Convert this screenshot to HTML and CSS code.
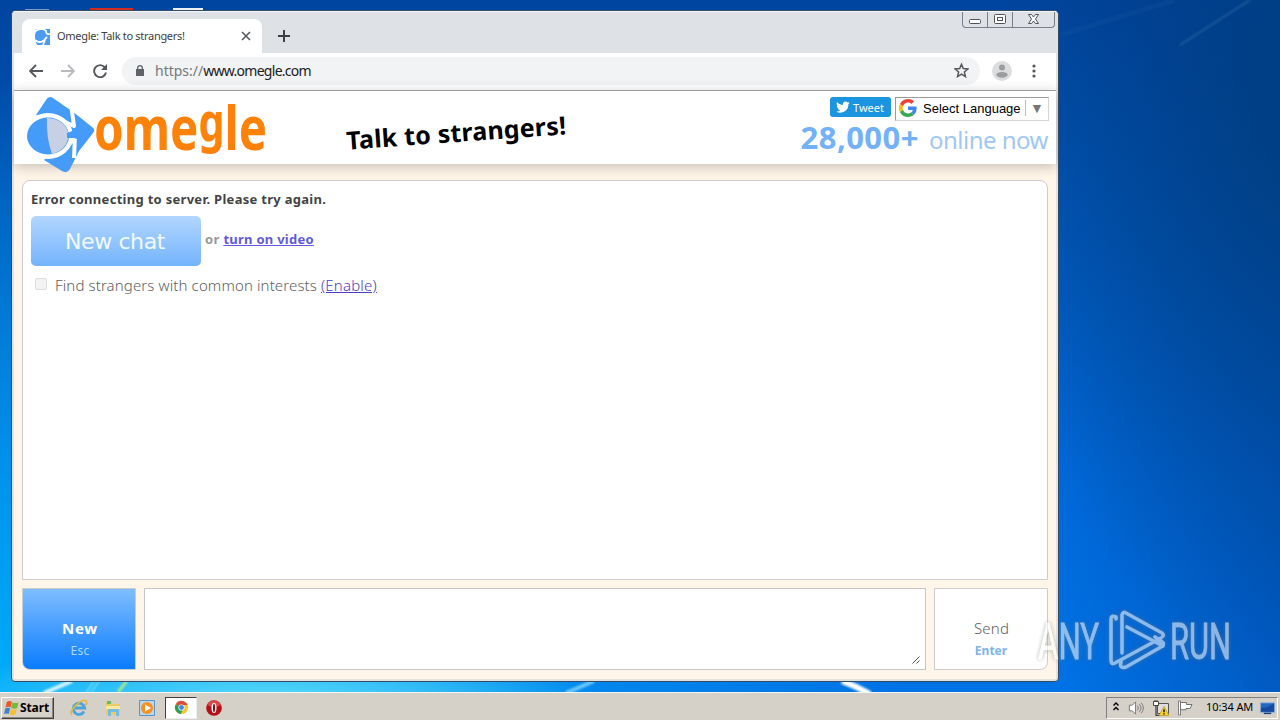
FILE: index.html
```html
<!DOCTYPE html>
<html lang="en">
<head>
<meta charset="utf-8">
<title>Omegle: Talk to strangers!</title>
<link rel="stylesheet" href="styles.css">
</head>
<body>
<div class="desktop">
  <svg class="wallpaper" viewBox="0 0 1280 720">
    <defs>
      <filter id="soft"><feGaussianBlur stdDeviation="1"/></filter>
    </defs>
    <g filter="url(#soft)" fill="none">
      <path d="M44 693L72 681" stroke="#d8f6ff" stroke-width="4"/>
      <path d="M86 693l8-12M91 693l8-12" stroke="#70dcf8" stroke-width="1.5"/>
      <path d="M118 692l9-11" stroke="#a8e890" stroke-width="3"/>
      <path d="M566 693l28-12" stroke="#70c8ff" stroke-width="4"/>
      <path d="M842 681q14 5 28 13" stroke="#fff" stroke-width="6"/>
      <path d="M1180 45L1250 0" stroke="#4b82b5" stroke-width="2" opacity=".4"/>
      <path d="M1060 35L1175 0" stroke="#3b72ad" stroke-width="5" opacity=".12"/>
    </g>
    <path d="M90 8h43v3H90z" fill="#d22b24"/><path d="M173 8h30v3h-30z" fill="#eef1f4"/><path d="M25 9h24v2H25z" fill="#7f9bc0"/>
  </svg>

  <main class="window">
    <div class="tabstrip">
      <div class="tab">
        <svg class="favicon" viewBox="0 0 17 17"><path d="M2 1h14v16H3l-2-5z" fill="#4b9cf4"/><path d="M0 4Q8-2 12 3q0 4 4 3M1 12q5 4 9 0l3-3M11 12l-2 5" fill="none" stroke="#fff" stroke-width="1.800"/><circle cx="6" cy="8" r="5" fill="#4b9cf4"/></svg>
        <span class="tab-title">Omegle: Talk to strangers!</span>
        <svg class="tab-close" viewBox="0 0 10 10"><path d="M1 1l8 8M9 1L1 9" stroke="#5a5d61" stroke-width="1.700"/></svg>
      </div>
      <svg class="new-tab" viewBox="0 0 12 12"><path d="M6 0v12M0 6h12" stroke="#3c4043" stroke-width="2"/></svg>
      <div class="caption">
        <span class="cap"><svg viewBox="0 0 13 14"><rect x=".5" y="6.500" width="11" height="4" rx="1" fill="#fff" stroke="#50535a"/></svg></span>
        <span class="cap"><svg viewBox="0 0 13 14"><rect x=".5" y="1.500" width="11" height="9" rx="1" fill="#fff" stroke="#50535a"/><rect x="3.500" y="4.500" width="5" height="3" fill="#fff" stroke="#50535a"/></svg></span>
        <span class="cap cap-close"><svg viewBox="0 0 13 14"><path d="M1.500 1.500h3l2 2.500 2-2.500h3L8.500 6l3 4.500h-3l-2-2.500-2 2.500h-3l3-4.500z" fill="#fff" stroke="#50535a"/></svg></span>
      </div>
    </div>
    <div class="toolbar">
      <svg class="nav back" viewBox="0 0 14 14"><path d="M14 7H1.500M7 1L1 7l6 6" fill="none" stroke="#55585c" stroke-width="1.900"/></svg>
      <svg class="nav fwd" viewBox="0 0 14 14"><path d="M0 7h12.500M7 1l6 6-6 6" fill="none" stroke="#b9bbbe" stroke-width="1.900"/></svg>
      <svg class="nav reload" viewBox="0 0 14 14"><path d="M11.800 3.300A6 6 0 1 0 13 8.500" fill="none" stroke="#55585c" stroke-width="1.900"/><path d="M14 0v6H8z" fill="#55585c"/></svg>
      <div class="omnibox">
        <svg class="lock" viewBox="0 0 8 11"><path d="M0 4h8v7H0z" fill="#5f6368"/><path d="M1.700 5V3a2.300 2.300 0 0 1 4.600 0v2" fill="none" stroke="#5f6368" stroke-width="1.300"/></svg>
        <span class="url"><span class="scheme">https://</span>www.omegle.com</span>
        <svg class="star" viewBox="0 0 14 14"><path d="M7 1.200l1.700 4 4.300.4-3.300 2.800 1 4.300L7 10.400l-3.700 2.300 1-4.300L1 5.600l4.300-.4z" fill="none" stroke="#55585c" stroke-width="1.400"/></svg>
      </div>
      <svg class="avatar" viewBox="0 0 20 20"><circle cx="10" cy="10" r="10" fill="#dcdddf"/><circle cx="10" cy="6.500" r="3" fill="#9b9da0"/><ellipse cx="10" cy="13.800" rx="5.700" ry="2.900" fill="#9b9da0"/></svg>
      <svg class="menu" viewBox="0 0 4 14"><circle cx="2" cy="2" r="1.600"/><circle cx="2" cy="7" r="1.600"/><circle cx="2" cy="12" r="1.600"/></svg>
    </div>

    <div class="page">
      <header class="header">
        <svg class="logo" viewBox="0 0 260 84">
          <path d="M17 24L27 9q3-5 7-2l10 7 9 6 20 16q4 3 1 6L60 60 51 78q-3 5-8 2L25 69 40 55V32z" fill="#449cf8"/>
          <ellipse cx="29" cy="45" rx="25" ry="23" fill="#fff"/>
          <path d="M46 31l9 4-3-22M47 58l9-13-1 22" fill="none" stroke="#fff" stroke-width="4" stroke-linejoin="round"/>
          <ellipse cx="29" cy="45" rx="21" ry="18.500" fill="#449cf8"/>
          <path d="M28 27C55 28 56 57 33 63Q27 46 28 27z" fill="#c8d0e5"/>
          <path d="M48 42l13-5v12l-6-2h-7z" fill="#449cf8"/>
          <text class="logo-word" x="75" y="59" textLength="173" lengthAdjust="spacingAndGlyphs">ome<tspan class="logo-g" dy="-9">g</tspan><tspan dy="9">le</tspan></text>
        </svg>
        <div class="tagline">Talk to strangers!</div>
        <div class="header-right">
          <div class="widgets">
            <span class="tweet"><svg viewBox="0 0 24 24"><path d="M23.600 4.900c-.8.400-1.800.6-2.700.8 1-.6 1.700-1.500 2.100-2.600-.9.500-1.900.9-3 1.100a4.800 4.800 0 0 0-8.200 4.400C7.800 8.400 4.200 6.500 1.900 3.500a4.800 4.800 0 0 0 1.400 6.400c-.8 0-1.500-.2-2.100-.6 0 2.300 1.600 4.300 3.800 4.800-.7.200-1.400.2-2.100.1.600 1.900 2.400 3.300 4.500 3.300A9.600 9.600 0 0 1 .3 19.500 13.600 13.600 0 0 0 21.200 7.400c.9-.7 1.700-1.500 2.400-2.500z" fill="#fff"/></svg><span>Tweet</span></span>
            <span class="language"><svg class="g-logo" viewBox="0 0 48 48"><path fill="#EA4335" d="M24 9.500c3.500 0 6.700 1.200 9.200 3.600l6.900-6.900A24 24 0 0 0 2.600 13.200l8 6.200C12.400 13.700 17.700 9.500 24 9.500z"/><path fill="#4285F4" d="M47 24.600c0-1.600-.2-3.100-.4-4.600H24v9h12.900c-.6 3-2.300 5.500-4.800 7.200l7.700 6C44.400 38 47 32 47 24.600z"/><path fill="#FBBC05" d="M10.500 28.600a14.500 14.500 0 0 1 0-9.200l-8-6.200a24 24 0 0 0 0 21.600z"/><path fill="#34A853" d="M24 48c6.500 0 11.900-2.100 15.900-5.800l-7.700-6C30 37.700 27.200 38.500 24 38.500c-6.300 0-11.600-4.200-13.500-9.900l-8 6.200A24 24 0 0 0 24 48z"/></svg><span class="lang-label">Select Language</span><span class="lang-arrow">▼</span></span>
          </div>
          <div class="count"><strong>28,000+</strong><span class="online">online now</span></div>
        </div>
      </header>

      <div class="chat">
        <section class="log">
          <p class="status">Error connecting to server. Please try again.</p>
          <div class="restart"><span class="new-chat">New chat</span><span class="or">or</span><a class="video">turn on video</a></div>
          <div class="interests"><span class="check"></span><span class="find">Find strangers with common interests</span><a class="enable">(Enable)</a></div>
        </section>
        <div class="controls">
          <div class="btn btn-new"><span class="new">New</span><span class="esc">Esc</span></div>
          <div class="message"><svg viewBox="0 0 8 8"><path d="M.5 7.500l7-7M4.500 7.500l3-3" stroke="#555" stroke-width="1"/></svg></div>
          <div class="btn btn-send"><span class="send">Send</span><span class="enter">Enter</span></div>
        </div>
      </div>
    </div>
  </main>

  <footer class="taskbar">
    <div class="start"><svg viewBox="0 0 16 16"><path d="M3 1.500q3-2 5.500 0L7 7.500q-2-1.500-5.500 0z" fill="#e8582a"/><path d="M9 2q3 1.500 6.500 0L14 8q-3 1.500-6.500 0z" fill="#77b83d"/><path d="M1.300 8.500q3-1.600 5.300 0L5 14.500q-2.700-1.500-5 0z" fill="#3f83cf"/><path d="M7.200 9q3 1.500 6.500 0L12 15q-3 1.500-6.300 0z" fill="#f3c22f"/></svg><span>Start</span></div>
    <div class="quick">
      <svg class="ql" viewBox="0 0 18 18"><path d="M14 12.500A5.700 5.700 0 1 1 14.600 9H5" fill="none" stroke="#49a5dc" stroke-width="2.800"/><path d="M2 16C-2 12 11-1 16 2q2 2-1 5" fill="none" stroke="#e2b83c" stroke-width="1.500"/></svg>
      <svg class="ql" viewBox="0 0 18 18"><path d="M2 3h6l1 2h7v11H2z" fill="#e9ce68"/><path d="M3 2h4v3H3z" fill="#67b96d"/><path d="M2 7h14v3H2z" fill="#fbe9a1"/><path d="M4 17v-6q0-1 1-1h9q1 0 1 1v6h-3v-4H7v4z" fill="#75bce5"/></svg>
      <svg class="ql" viewBox="0 0 18 18"><path d="M1.500 1.500h15v15h-15z" fill="#b9d8ef" stroke="#5a95c9"/><circle cx="9" cy="9" r="6" fill="#f5921e"/><path d="M7 5.500L13 9l-6 3.500z" fill="#fff"/></svg>
      <span class="active-app"><svg viewBox="0 0 16 16"><circle cx="8" cy="8" r="7" fill="#f4c631"/><path d="M8 8L2 4.400A7 7 0 0 1 14.500 5.200H8z" fill="#dd4b3e"/><path d="M8 8L2 4.400A7 7 0 0 0 7 15l3-5.500z" fill="#2f9d58"/><circle cx="8" cy="8" r="3.300" fill="#fff"/><circle cx="8" cy="8" r="2.600" fill="#4285f4"/></svg></span>
      <svg class="ql opera" viewBox="0 0 18 18"><circle cx="9" cy="9" r="7.800" fill="#b41017"/><path d="M2 6a8 8 0 0 1 14 0q-7 4-14 0z" fill="#d84b4b"/><ellipse cx="9" cy="9" rx="2.500" ry="5" fill="#fff"/><ellipse cx="9" cy="9" rx="1" ry="4.200" fill="#7d0a10"/></svg>
    </div>
    <div class="tray">
      <svg class="chev" viewBox="0 0 6 9"><path d="M.5 3.500L3 1l2.500 2.500M.5 8L3 5.500 5.500 8" fill="none" stroke="#000" stroke-width="1.400"/></svg>
      <svg class="speaker" viewBox="0 0 18 16"><path d="M1.500 5h3L8 1.500v13L4.500 11h-3z" fill="#fff" stroke="#777"/><path d="M10 5.500q2 2.500 0 5M12 4q3.500 4 0 8M14 2.500q4.500 5.500 0 11" fill="none" stroke="#777"/></svg>
      <svg class="net" viewBox="0 0 16 16"><path d="M4.500 3.500h11v10h-11z" fill="#ddd" stroke="#555"/><path d="M3 6v9.500h4" fill="none" stroke="#444" stroke-width="1.300"/><path d="M.5 1.500h5v4h-5z" fill="#fff" stroke="#444"/><path d="M2 0v2M4 0v2" stroke="#444"/><path d="M11 6.500l5 9H6z" fill="#f8d32c" stroke="#b99310" stroke-width=".7"/><path d="M10.400 9.300h1.300v3h-1.300zM10.400 13.200h1.300v1.200h-1.300z"/></svg>
      <svg class="flag" viewBox="0 0 16 16"><path d="M1.500 1v14h2V1z" fill="#fff" stroke="#666" stroke-width=".8"/><path d="M3.500 2.500h6v2h5.500l-2 4h-4v1.200H3.500z" fill="#fff" stroke="#666" stroke-width=".9"/></svg>
      <span class="clock">10:34 AM</span>
      <svg class="desk" viewBox="0 0 16 14"><path d="M.5 1.500h15v10H.5z" fill="#2566bf" stroke="#86aee0"/><path d="M1 7q8 0 14-5v9H1z" fill="#174a9d"/><path d="M4 12h8v1.500H4z" fill="#1b3d78"/></svg>
    </div>
  </footer>

  <svg class="watermark" viewBox="0 0 210 70">
    <text class="wm" x="2" y="52" textLength="61" lengthAdjust="spacingAndGlyphs">ANY</text>
    <path d="M80 12v-2q-5-2-5 2v41q0 5 4 3l46-25M86 46V8q1-4 4-2l36 20q2 2 1 3M91 20l36 19M85 55q-2 7 5 5l35-20q5-3 0-6l-6-4" fill="none" stroke="#fff" stroke-width="3.600" stroke-linecap="round" stroke-linejoin="round"/>
    <text class="wm" x="134" y="52" textLength="61" lengthAdjust="spacingAndGlyphs">RUN</text>
  </svg>
</div>
</body>
</html>
```
FILE: styles.css
```css
* { box-sizing: border-box; }
body { margin: 0; font-family: "Noto Sans", sans-serif; }
svg { display: block; flex: none; }
.desktop {
  position: relative; display: flex; flex-direction: column; justify-content: space-between;
  width: 1280px; height: 720px; overflow: hidden;
  background:
    radial-gradient(ellipse 330px 60px at 270px 700px, #58dcf8 0, rgba(70,205,248,.7) 50%, transparent 100%),
    radial-gradient(ellipse 300px 560px at 1290px 120px, rgba(0,60,120,.75), transparent 100%),
    linear-gradient(90deg, transparent 1060px, rgba(0,60,150,.45) 1280px),
    radial-gradient(ellipse 900px 640px at 0 720px, rgba(0,190,255,.8), transparent 100%),
    linear-gradient(180deg, #0045a0 0, #0058bc 35%, #0068d8 65%, #0074e8 100%);
}
.wallpaper { position: absolute; left: 0; top: 0; width: 1280px; height: 720px; }
.window {
  position: relative; display: flex; flex-direction: column; width: 1048px; height: 672px; margin: 10px 0 0 11px;
  border: 1px solid #344b65; border-radius: 5px 5px 4px 4px; padding: 0 2px 2px; background: #e4e2e0; overflow: hidden;
}
.tabstrip { display: flex; height: 42px; background: #dee1e6; margin: 0 -2px; padding-left: 10px; border-top: 1px solid #f3f5f8; }
.tab { display: flex; align-items: center; width: 240px; height: 34px; margin-top: 7px; padding: 0 11px 0 12px; background: #fff; border-radius: 8px 8px 0 0; }
.favicon { width: 17px; height: 17px; margin-right: 6px; }
.tab-title { flex: 1; font-size: 11px; color: #3c4043; white-space: nowrap; letter-spacing: -.3px; margin-bottom: 2px; }
.tab-close { width: 10px; height: 10px; }
.new-tab { width: 12px; height: 12px; margin: 18px 0 0 16px; }
.caption { display: flex; margin-left: auto; margin-right: 3px; height: 16px; border: 1px solid #7b7f88; border-top: 0; border-radius: 0 0 4px 4px; }
.cap { display: flex; justify-content: center; width: 25px; border-right: 1px solid #7b7f88; }
.cap-close { width: 41px; border: 0; }
.cap svg { width: 13px; height: 14px; margin-top: 1px; }
.toolbar { display: flex; align-items: center; height: 38px; background: #fff; border-bottom: 1px solid #a9a9a9; padding: 0 0 2px 15px; }
.nav { width: 14px; height: 14px; }
.fwd, .reload { margin-left: 18px; }
.omnibox { display: flex; align-items: center; width: 858px; height: 28px; border-radius: 14px; background: #f1f3f4; margin-left: 15px; padding: 0 11px 0 14px; }
.lock { width: 8px; height: 11px; margin-right: 11px; }
.url { flex: 1; font-size: 14px; color: #202124; letter-spacing: -.72px; }
.scheme { color: #75787c; letter-spacing: 0; }
.star { width: 15px; height: 15px; }
.avatar { width: 20px; height: 20px; margin-left: 12px; }
.menu { width: 4px; height: 14px; margin-left: 20px; fill: #55585c; }
.page { flex: 1; display: flex; flex-direction: column; background: #fff5e9; min-height: 0; }
.header { position: relative; display: flex; height: 73px; background: #fff; box-shadow: 0 2px 12px rgba(0,0,0,.25); }
.logo { width: 260px; height: 84px; margin-left: 5px; overflow: visible; }
.logo-word { font: 700 61px "Noto Sans", sans-serif; fill: #ff8208; }
.logo-g { font-size: 53px; }
.tagline { margin: 23px 0 0 67px; font-size: 25px; font-weight: 700; letter-spacing: .2px; line-height: 36px; height: 36px; color: #000; transform: rotate(-4deg); white-space: nowrap; }
.header-right { display: flex; flex-direction: column; align-items: flex-end; margin-left: auto; padding: 6px 7px 0 0; }
.widgets { display: flex; gap: 4px; align-items: flex-start; }
.tweet { display: flex; align-items: center; width: 61px; height: 20px; padding-left: 6px; border-radius: 3px; background: #1b95e0; color: #fff; font-size: 11px; }
.tweet svg { width: 14px; height: 14px; margin-right: 3px; }
.language { display: flex; align-items: center; width: 154px; height: 24px; padding: 0 0 2px 3px; border: 1px solid #d5d5d5; border-top-color: #9b9b9b; border-left-color: #9b9b9b; font: 13px "Liberation Sans", sans-serif; color: #000; }
.g-logo { width: 18px; height: 18px; margin-right: 6px; }
.lang-label { flex: 1; white-space: nowrap; }
.lang-arrow { width: 23px; border-left: 1px solid #bbb; color: #767676; font-size: 14px; line-height: 16px; text-align: center; }
.count { margin-right: 1px; font-size: 24px; line-height: 32px; color: #9fc8f4; white-space: nowrap; letter-spacing: -.5px; }
.count strong { font-size: 31px; color: #73b2f9; letter-spacing: .45px; margin-right: 10px; }
.chat { display: flex; flex-direction: column; flex: 1; padding: 16px 8px 9px; gap: 8px; }
.log { height: 400px; border: 1px solid #ccc; border-radius: 8px 8px 0 0; background: #fff; padding: 8px; }
.status { margin: 0; height: 27px; font-size: 13px; line-height: 20px; font-weight: 700; color: #444; letter-spacing: .29px; }
.restart { display: flex; align-items: center; height: 50px; font-size: 13px; font-weight: 700; color: #999; letter-spacing: .25px; }
.new-chat { display: flex; align-items: center; justify-content: center; width: 170px; height: 50px; padding-right: 2px; border-radius: 5px; background: linear-gradient(#b2d6ff, #74b4fd); color: #f0f9ff; font: 22px "DejaVu Sans", sans-serif; letter-spacing: -.4px; }
.or { margin: 0 4px 4px; }
.video { margin-bottom: 4px; color: #6459dc; text-decoration: underline; }
.interests { display: flex; align-items: center; margin-top: 8px; height: 22px; font-size: 15px; color: #606060; font-weight: 300; letter-spacing: .12px; }
.check { width: 12px; height: 12px; border: 1px solid #ddd; border-radius: 2px; background: #f3f3f3; margin: 0 8px 2px 4px; }
.enable { margin-left: 4px; color: #4a40c0; text-decoration: underline; letter-spacing: .2px; }
.controls { display: flex; gap: 8px; height: 82px; }
.btn { display: flex; flex-direction: column; align-items: center; width: 114px; padding-top: 28px; border: 1px solid #ccc; }
.btn-new { border-radius: 0 0 0 8px; background: linear-gradient(#7fbdff, #0a7cff); }
.btn-send { border-radius: 0 0 8px 0; background: #fff; }
.new, .send { height: 24px; font-size: 15px; line-height: 22px; }
.new { color: #fff; font-weight: 700; letter-spacing: .7px; padding-left: 2px; }
.send { color: #606060; font-weight: 300; letter-spacing: .2px; padding-left: 1px; }
.esc, .enter { font-size: 12px; line-height: 20px; }
.esc { color: #a7dbff; letter-spacing: .3px; padding-left: 2px; }
.enter { color: #7eb5e9; font-weight: 700; }
.message { display: flex; flex: 1; align-items: flex-end; justify-content: flex-end; padding: 5px; border: 1px solid #c5c5c5; background: #fff; }
.message svg { width: 8px; height: 8px; }
.taskbar { position: relative; display: flex; align-items: center; height: 28px; padding: 2px 2px 0 1px; background: #d5d0c8; border-top: 1px solid #f8f6f2; }
.start { display: flex; align-items: center; gap: 1px; width: 53px; height: 22px; padding-left: 2px; border: 1px solid; border-color: #fff #404040 #404040 #fff; box-shadow: inset -1px -1px #8a8680; font-size: 12px; font-weight: 700; letter-spacing: -.1px; }
.start span { margin-bottom: 1px; }
.start svg { width: 15px; height: 16px; }
.quick { display: flex; align-items: center; margin-left: 16px; }
.ql { width: 18px; height: 18px; margin-right: 16px; }
.active-app { display: flex; align-items: center; justify-content: center; width: 32px; height: 22px; margin-left: -7px; background: #fff; border: 1px solid; border-color: #404040 #eee #eee #404040; }
.active-app svg { width: 15px; height: 15px; }
.opera { margin-left: 8px; }
.tray { display: flex; align-items: center; margin-left: auto; width: 172px; height: 22px; border: 1px solid; border-color: #808080 #fff #fff #808080; padding-left: 6px; }
.chev { width: 6px; height: 9px; margin-bottom: 3px; }
.speaker { width: 17px; height: 16px; margin-left: 9px; }
.net { width: 16px; height: 16px; margin-left: 8px; }
.flag { width: 16px; height: 16px; margin-left: 8px; }
.clock { margin: 0 0 2px 13px; font-size: 11px; white-space: nowrap; letter-spacing: -.1px; }
.desk { width: 15px; height: 14px; margin-left: auto; margin-right: 2px; }
.watermark { position: absolute; left: 1036px; top: 607px; width: 210px; height: 70px; overflow: visible; opacity: .55; filter: drop-shadow(0 0 2px #777); }
.wm { font: 50px Roboto, sans-serif; fill: #fff; stroke: #fff; stroke-width: .8px; }
```
